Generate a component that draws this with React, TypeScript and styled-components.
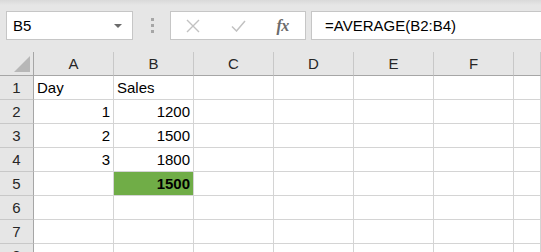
import React from 'react';
import styled, { createGlobalStyle } from 'styled-components';

const GlobalStyle = createGlobalStyle`
    html, body {
        margin: 0;
        padding: 0;
        background: #ffffff;
        overflow: hidden;
    }
    body {
        font-family: 'Liberation Sans', Arial, sans-serif;
        color: #000000;
    }
`;

const Page = styled.div`
    width: 541px;
    height: 252px;
    overflow: hidden;
    background: #ffffff;
`;

const Toolbar = styled.div`
    height: 52px;
    box-sizing: border-box;
    padding: 11px 0 0 6px;
    display: flex;
    align-items: flex-start;
    background: linear-gradient(#d9d9d9 0px, #e6e6e6 5px, #e6e6e6 100%);
`;

const NameBox = styled.div`
    width: 127px;
    height: 29px;
    box-sizing: border-box;
    border: 1px solid #c6c6c6;
    background: #ffffff;
    display: flex;
    align-items: center;
    justify-content: space-between;
    padding: 0 10px 0 6px;
    font-size: 15px;
`;

const DropArrow = styled.span`
    width: 0;
    height: 0;
    border-left: 4px solid transparent;
    border-right: 4px solid transparent;
    border-top: 4px solid #6b6b6b;
`;

const Grip = styled.div`
    width: 37px;
    height: 29px;
    display: flex;
    flex-direction: column;
    align-items: center;
    justify-content: center;
    gap: 3px;
    padding-left: 1px;
    box-sizing: border-box;
`;

const GripDot = styled.span`
    width: 3px;
    height: 3px;
    background: #a6a6a6;
`;

const FxBox = styled.div`
    width: 136px;
    height: 29px;
    box-sizing: border-box;
    border: 1px solid #c6c6c6;
    background: #ffffff;
    display: flex;
    align-items: center;
    margin-right: 5px;
`;

const FxButton = styled.div`
    width: 45px;
    height: 100%;
    display: flex;
    align-items: center;
    justify-content: center;
`;

const FxLabel = styled.span`
    font-family: 'Liberation Serif', 'Times New Roman', serif;
    font-style: italic;
    font-weight: bold;
    font-size: 16px;
    color: #6b6b6b;
    letter-spacing: -0.5px;
`;

const FormulaInput = styled.div`
    flex: 1;
    height: 29px;
    box-sizing: border-box;
    border: 1px solid #c6c6c6;
    border-right: none;
    background: #ffffff;
    display: flex;
    align-items: center;
    padding-left: 13px;
    font-size: 15px;
`;

const Sheet = styled.div`
    display: grid;
    grid-template-columns: 34px repeat(6, 80px) 1fr;
    grid-auto-rows: 24px;
    background: #ffffff;
`;

const HeaderCell = styled.div<{ $corner?: boolean }>`
    box-sizing: border-box;
    background: #e6e6e6;
    border-right: 1px solid ${p => (p.$corner ? '#a6a6a6' : '#c8c8c8')};
    border-bottom: 1px solid #a6a6a6;
    display: flex;
    align-items: center;
    justify-content: center;
    font-size: 15px;
    color: #262626;
    position: relative;
`;

const CornerMark = styled.span`
    position: absolute;
    right: 3px;
    bottom: 3px;
    width: 0;
    height: 0;
    border-left: 16px solid transparent;
    border-bottom: 16px solid #b7b7b7;
`;

const RowHeader = styled.div`
    box-sizing: border-box;
    background: #e6e6e6;
    border-right: 1px solid #a6a6a6;
    border-bottom: 1px solid #c8c8c8;
    display: flex;
    align-items: center;
    justify-content: center;
    font-size: 15px;
    color: #262626;
`;

const Cell = styled.div<{ $align?: 'left' | 'right'; $fill?: string; $bold?: boolean }>`
    box-sizing: border-box;
    border-right: 1px solid #d4d4d4;
    border-bottom: 1px solid #d4d4d4;
    background: ${p => p.$fill || '#ffffff'};
    display: flex;
    align-items: center;
    justify-content: ${p => (p.$align === 'right' ? 'flex-end' : 'flex-start')};
    padding: 0 3px;
    font-size: 15px;
    font-weight: ${p => (p.$bold ? 'bold' : 'normal')};
    white-space: nowrap;
    overflow: hidden;
`;

type CellData = { v?: string; align?: 'left' | 'right'; fill?: string; bold?: boolean };

const columns = ['A', 'B', 'C', 'D', 'E', 'F', ''];

const rows: CellData[][] = [
    [{ v: 'Day' }, { v: 'Sales' }],
    [{ v: '1', align: 'right' }, { v: '1200', align: 'right' }],
    [{ v: '2', align: 'right' }, { v: '1500', align: 'right' }],
    [{ v: '3', align: 'right' }, { v: '1800', align: 'right' }],
    [{}, { v: '1500', align: 'right', fill: '#70ad47', bold: true }],
    [],
    [],
    [],
];

const CancelIcon = () => (
    <svg width="14" height="14" viewBox="0 0 14 14">
        <path d="M1 1 L13 13 M13 1 L1 13" stroke="#c2c2c2" strokeWidth="1.4" fill="none" />
    </svg>
);

const EnterIcon = () => (
    <svg width="15" height="12" viewBox="0 0 15 12">
        <path d="M1 6.5 L5.5 11 L14 1" stroke="#c2c2c2" strokeWidth="1.5" fill="none" />
    </svg>
);

export default function App() {
    return (
        <Page>
            <GlobalStyle />
            <Toolbar>
                <NameBox>
                    <span>B5</span>
                    <DropArrow />
                </NameBox>
                <Grip>
                    <GripDot />
                    <GripDot />
                    <GripDot />
                </Grip>
                <FxBox>
                    <FxButton>
                        <CancelIcon />
                    </FxButton>
                    <FxButton>
                        <EnterIcon />
                    </FxButton>
                    <FxButton>
                        <FxLabel>fx</FxLabel>
                    </FxButton>
                </FxBox>
                <FormulaInput>=AVERAGE(B2:B4)</FormulaInput>
            </Toolbar>
            <Sheet>
                <HeaderCell $corner>
                    <CornerMark />
                </HeaderCell>
                {columns.map((c, i) => (
                    <HeaderCell key={i}>{c}</HeaderCell>
                ))}
                {rows.map((row, r) => (
                    <React.Fragment key={r}>
                        <RowHeader>{r + 1}</RowHeader>
                        {columns.map((_, c) => {
                            const d = row[c] || {};
                            return (
                                <Cell key={c} $align={d.align} $fill={d.fill} $bold={d.bold}>
                                    {d.v}
                                </Cell>
                            );
                        })}
                    </React.Fragment>
                ))}
            </Sheet>
        </Page>
    );
}
